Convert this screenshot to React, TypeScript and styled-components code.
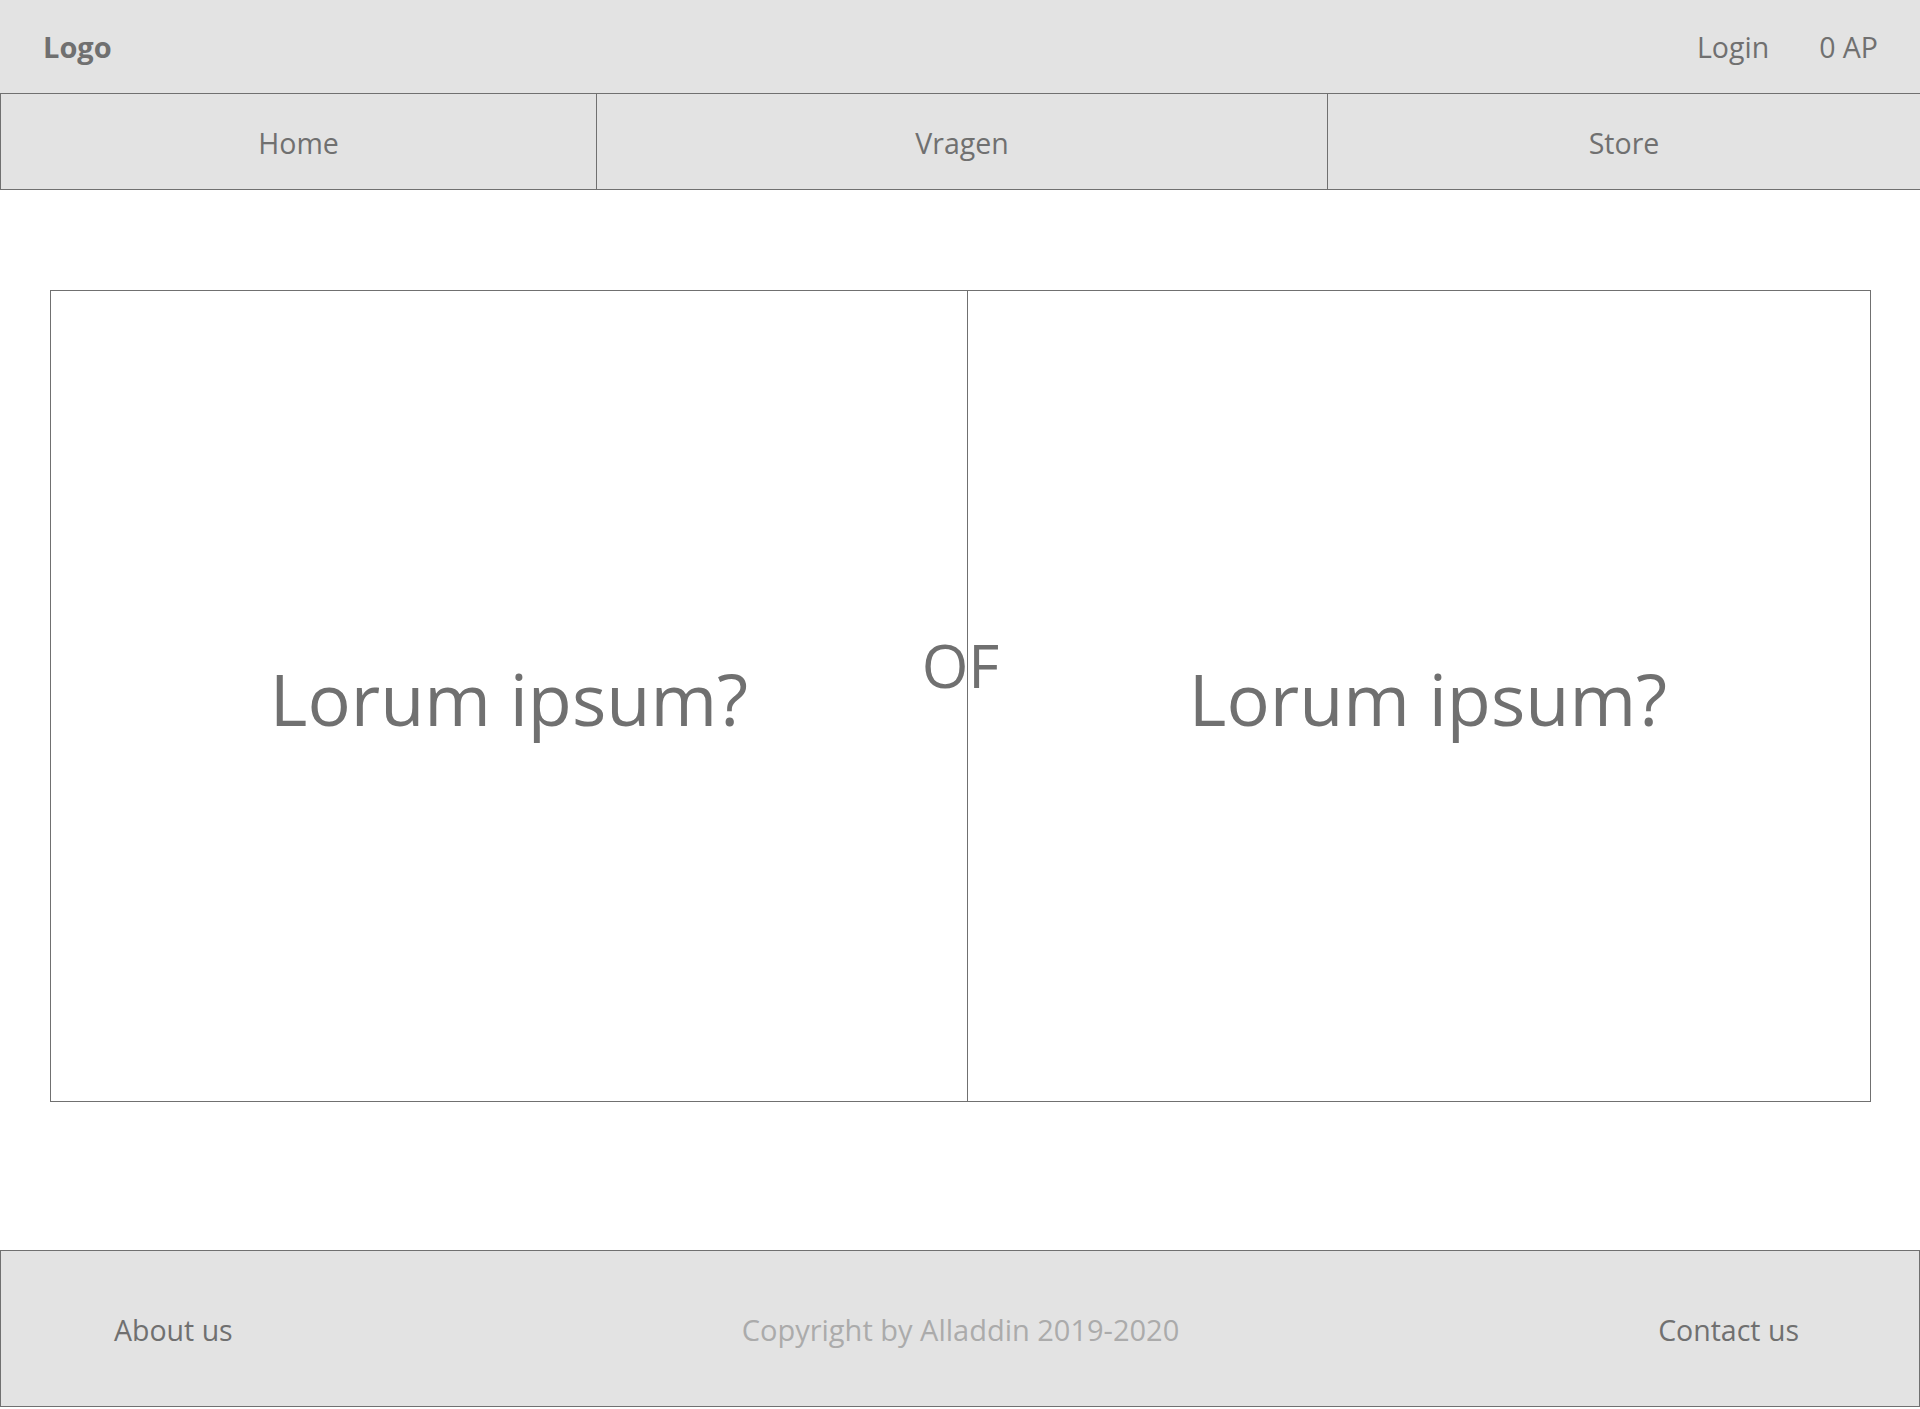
import React from "react";
import styled, { createGlobalStyle } from "styled-components";

const Global = createGlobalStyle`
  html, body { margin: 0; padding: 0; background: #ffffff; }
  body { font-family: "Open Sans", "Noto Sans", sans-serif; color: #707070; }
  * { box-sizing: border-box; }
`;

const Page = styled.div`
  width: 1920px;
  height: 1409px;
  display: flex;
  flex-direction: column;
`;

const Header = styled.header`
  height: 93px;
  background: #e3e3e3;
  display: flex;
  align-items: center;
  justify-content: space-between;
  padding: 0 42px 0 43px;
`;

const Logo = styled.div`
  font-size: 29px;
  font-weight: 700;
  color: #707070;
`;

const HeaderLinks = styled.div`
  display: flex;
  gap: 50px;
  font-size: 28.5px;
`;

const HeaderLink = styled.span`
  color: #707070;
`;

const Nav = styled.nav`
  display: grid;
  grid-template-columns: 596px 731px 593px;
  height: 97px;
  background: #e3e3e3;
  border-top: 1px solid #707070;
  border-bottom: 1px solid #707070;
  border-left: 1px solid #707070;
`;

const NavItem = styled.div`
  display: flex;
  align-items: center;
  justify-content: center;
  padding-top: 2px;
  border-right: 1px solid #707070;
  font-size: 28.5px;
  color: #707070;
`;

const Main = styled.main`
  flex: 1;
  padding: 100px 49px 0 50px;
`;

const Compare = styled.section`
  position: relative;
  height: 812px;
  border: 1px solid #707070;
  display: grid;
  grid-template-columns: 917px 1fr;
`;

const Choice = styled.div<{ $divider?: boolean }>`
  display: flex;
  align-items: center;
  justify-content: center;
  padding-top: 4px;
  font-size: 72px;
  color: #707070;
  border-right: ${(p) => (p.$divider ? "1px solid #707070" : "none")};
  padding-left: ${(p) => (p.$divider ? "0" : "18px")};
`;

const Or = styled.div`
  position: absolute;
  left: 50%;
  top: 344px;
  transform: translateX(-50%);
  font-size: 60px;
  line-height: 1;
  color: #707070;
`;

const Footer = styled.footer`
  height: 157px;
  margin-bottom: 2px;
  background: #e3e3e3;
  border: 1px solid #707070;
  display: grid;
  grid-template-columns: 1fr auto 1fr;
  align-items: center;
  padding: 2px 120px 0 113px;
  font-size: 28.5px;
`;

const FooterLink = styled.span<{ $end?: boolean }>`
  color: #707070;
  justify-self: ${(p) => (p.$end ? "end" : "start")};
`;

const Copyright = styled.span`
  color: #ababab;
  font-size: 29px;
  margin-left: 8px;
`;

export default function App() {
  return (
    <Page>
      <Global />
      <Header>
        <Logo>Logo</Logo>
        <HeaderLinks>
          <HeaderLink>Login</HeaderLink>
          <HeaderLink>0 AP</HeaderLink>
        </HeaderLinks>
      </Header>
      <Nav>
        <NavItem>Home</NavItem>
        <NavItem>Vragen</NavItem>
        <NavItem>Store</NavItem>
      </Nav>
      <Main>
        <Compare>
          <Choice $divider>Lorum ipsum?</Choice>
          <Choice>Lorum ipsum?</Choice>
          <Or>OF</Or>
        </Compare>
      </Main>
      <Footer>
        <FooterLink>About us</FooterLink>
        <Copyright>Copyright by Alladdin 2019-2020</Copyright>
        <FooterLink $end>Contact us</FooterLink>
      </Footer>
    </Page>
  );
}
